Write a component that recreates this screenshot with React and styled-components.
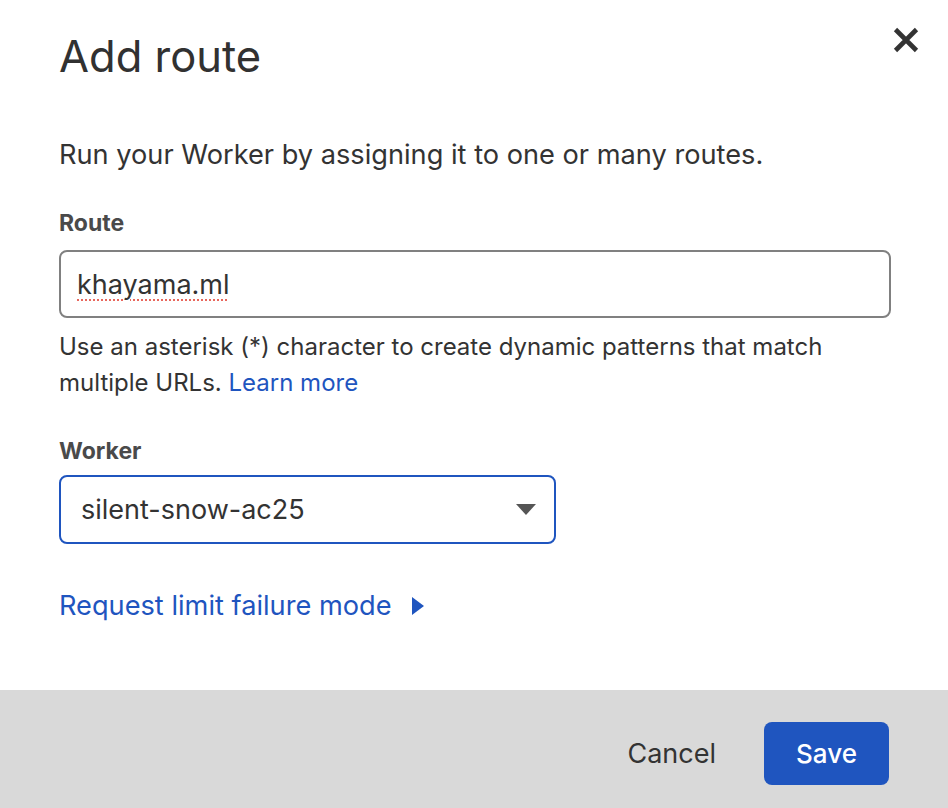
import React from "react";
import styled, { createGlobalStyle } from "styled-components";

const Global = createGlobalStyle`
  html, body { margin: 0; padding: 0; background: #ffffff; }
  body { font-family: Inter, "Noto Sans", "Liberation Sans", sans-serif; color: #333333; }
  * { box-sizing: border-box; }
`;

const Dialog = styled.div`
  width: 948px;
  height: 808px;
  display: flex;
  flex-direction: column;
  background: #ffffff;
`;

const Body = styled.div`
  flex: 1;
  padding: 0 59px;
`;

const Header = styled.div`
  display: flex;
  justify-content: space-between;
  align-items: flex-start;
  padding-top: 28px;
`;

const Title = styled.h2`
  margin: 0;
  font-size: 43.5px;
  line-height: 56px;
  font-weight: 400;
  color: #313131;
`;

const CloseButton = styled.button`
  border: 0;
  background: none;
  padding: 0;
  margin: -1px -30px 0 0;
  width: 26px;
  height: 26px;
  cursor: pointer;
  display: flex;
  color: #333333;
`;

const Description = styled.p`
  margin: 51px 0 0;
  font-size: 27.2px;
  line-height: 40px;
  color: #333333;
`;

const Field = styled.div`
  margin-top: ${(p) => p.$top}px;
`;

const Label = styled.div`
  font-size: 23px;
  line-height: 30px;
  font-weight: 700;
  color: #4a4a4a;
  margin-bottom: ${(p) => p.$gap}px;
`;

const InputBox = styled.div`
  width: 832px;
  height: 68px;
  border: 2px solid #808080;
  border-radius: 8px;
  padding: 0 16px;
  display: flex;
  align-items: center;
  font-size: 27px;
  color: #333333;
`;

const Misspelt = styled.span`
  text-decoration: underline dotted #e8675d;
  text-decoration-thickness: 2px;
  text-underline-offset: 6px;
`;

const Help = styled.p`
  margin: 11px 0 0;
  font-size: 24px;
  line-height: 36px;
  color: #333333;
  max-width: 800px;
`;

const Link = styled.a`
  color: #1f55bf;
  text-decoration: none;
  cursor: pointer;
`;

const SelectBox = styled.div`
  width: 497px;
  height: 69px;
  border: 2px solid #1f55bf;
  border-radius: 8px;
  padding: 0 18px 0 20px;
  display: flex;
  align-items: center;
  justify-content: space-between;
  font-size: 27px;
  color: #333333;
`;

const Toggle = styled.a`
  margin-top: 42px;
  display: flex;
  width: fit-content;
  align-items: center;
  gap: 20px;
  color: #1f55bf;
  font-size: 27.2px;
  line-height: 40px;
  cursor: pointer;
`;

const Footer = styled.div`
  height: 118px;
  background: #d9d9d9;
  display: flex;
  justify-content: flex-end;
  align-items: flex-start;
  gap: 48px;
  padding: 32px 59px 0 0;
`;

const TextButton = styled.button`
  border: 0;
  background: none;
  font-family: inherit;
  font-size: 27px;
  color: #333333;
  height: 63px;
  padding: 0;
  cursor: pointer;
`;

const PrimaryButton = styled.button`
  border: 0;
  background: #1f55bf;
  color: #ffffff;
  font-family: inherit;
  font-size: 26px;
  font-weight: 500;
  width: 125px;
  height: 63px;
  border-radius: 8px;
  cursor: pointer;
`;

export default function App() {
  return (
    <>
      <Global />
      <Dialog>
        <Body>
          <Header>
            <Title>Add route</Title>
            <CloseButton aria-label="Close">
              <svg width="26" height="26" viewBox="0 0 26 26">
                <path d="M2.5 2.5 L23.5 23.5 M23.5 2.5 L2.5 23.5" stroke="currentColor" strokeWidth="4.6" strokeLinecap="butt" />
              </svg>
            </CloseButton>
          </Header>
          <Description>Run your Worker by assigning it to one or many routes.</Description>
          <Field $top={33}>
            <Label $gap={12}>Route</Label>
            <InputBox>
              <Misspelt>khayama.ml</Misspelt>
            </InputBox>
            <Help>
              Use an asterisk (*) character to create dynamic patterns that match multiple URLs.{" "}
              <Link>Learn more</Link>
            </Help>
          </Field>
          <Field $top={35}>
            <Label $gap={9}>Worker</Label>
            <SelectBox>
              <span>silent-snow-ac25</span>
              <svg width="20" height="11" viewBox="0 0 20 11">
                <path d="M0 0 L20 0 L10 11 Z" fill="#555555" />
              </svg>
            </SelectBox>
          </Field>
          <Toggle>
            <span>Request limit failure mode</span>
            <svg width="12" height="18" viewBox="0 0 12 18">
              <path d="M0 0 L12 9 L0 18 Z" fill="#1f55bf" />
            </svg>
          </Toggle>
        </Body>
        <Footer>
          <TextButton>Cancel</TextButton>
          <PrimaryButton>Save</PrimaryButton>
        </Footer>
      </Dialog>
    </>
  );
}
